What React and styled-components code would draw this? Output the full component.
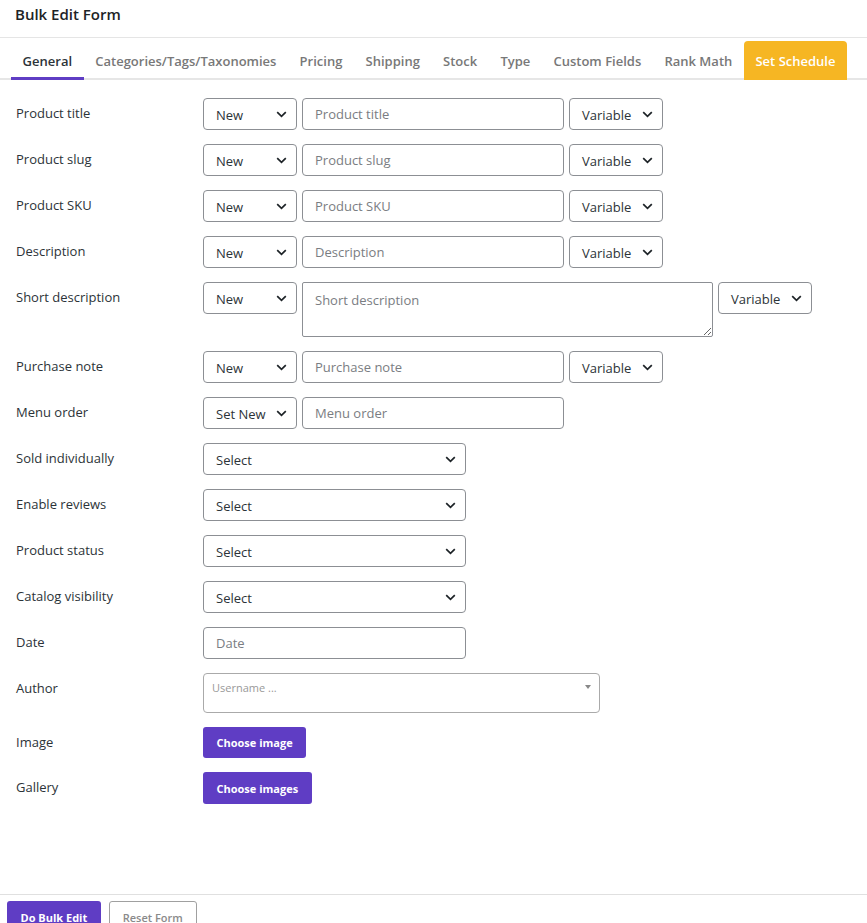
import React from "react";
import styled, { createGlobalStyle } from "styled-components";

const GlobalStyle = createGlobalStyle`
  html, body {
    margin: 0;
    padding: 0;
    background: #fff;
    overflow: hidden;
  }
  body {
    font-family: "Open Sans", "Noto Sans", sans-serif;
    color: #2c3338;
  }
  * {
    box-sizing: border-box;
  }
`;

const Page = styled.div`
  width: 867px;
  display: flex;
  flex-direction: column;
`;

const Header = styled.div`
  height: 38px;
  padding: 0 15px;
  display: flex;
  align-items: center;
  border-bottom: 1px solid #e5e5e5;
`;

const Title = styled.h1`
  margin: 0;
  margin-top: -9px;
  font-size: 15px;
  font-weight: 600;
  color: #1d2327;
`;

const TabBar = styled.div`
  display: flex;
  padding: 3px 0 0 11px;
  border-bottom: 2px solid #e6e6e6;
`;

const Tab = styled.div`
  height: 39px;
  margin-bottom: -2px;
  padding: 3px 11.6px 0;
  display: flex;
  align-items: center;
  font-size: 13px;
  font-weight: 600;
  white-space: nowrap;
  color: ${(p) => (p.$active ? "#2c3338" : p.$accent ? "#fff" : "#787878")};
  background: ${(p) => (p.$accent ? "#f6b623" : "transparent")};
  border-radius: ${(p) => (p.$accent ? "4px 4px 0 0" : "0")};
  border-bottom: 3px solid ${(p) => (p.$active ? "#5f3dc4" : "transparent")};
`;

const Body = styled.div`
  padding: 18px 16px 90px 16px;
`;

const Row = styled.div`
  display: grid;
  grid-template-columns: 187px 1fr;
  margin-bottom: 14px;
  &:last-child {
    margin-bottom: 0;
  }
`;

const Label = styled.div`
  font-size: 13px;
  line-height: 18px;
  padding-top: 6px;
  color: #2c3338;
`;

const Controls = styled.div`
  display: flex;
  align-items: flex-start;
  gap: 5px;
`;

const SelectBox = styled.div`
  width: ${(p) => p.$w}px;
  height: 32px;
  padding: 2px 9px 0 12px;
  display: flex;
  align-items: center;
  justify-content: space-between;
  border: 1px solid #8c8f94;
  border-radius: 4px;
  font-size: 13px;
  color: #2c3338;
  background: #fff;
  svg {
    flex-shrink: 0;
    margin-top: -2px;
  }
`;

const TextInput = styled.input`
  width: ${(p) => p.$w}px;
  height: 32px;
  padding: 0 12px;
  border: 1px solid #8c8f94;
  border-radius: 4px;
  font-family: inherit;
  font-size: 13px;
  color: #2c3338;
  &::placeholder {
    color: #7a7d82;
  }
`;

const TextArea = styled.textarea`
  width: 411px;
  height: 55px;
  padding: 7px 12px;
  border: 1px solid #8c8f94;
  border-radius: 2px;
  font-family: inherit;
  font-size: 13px;
  line-height: 20px;
  &::placeholder {
    color: #7a7d82;
  }
`;

const AuthorBox = styled.div`
  position: relative;
  width: 397px;
  height: 40px;
  padding: 6px 8px;
  border: 1px solid #aaa;
  border-radius: 4px;
  font-size: 11px;
  color: #999;
`;

const Caret = styled.span`
  position: absolute;
  right: 8px;
  top: 11px;
  border-left: 3px solid transparent;
  border-right: 3px solid transparent;
  border-top: 4px solid #888;
`;

const PurpleButton = styled.button`
  height: ${(p) => (p.$tall ? 32 : 31)}px;
  padding: 0 13.5px;
  border: none;
  border-radius: 3px;
  background: #5f3dc4;
  color: #fff;
  font-family: inherit;
  font-size: 11px;
  font-weight: 700;
`;

const Footer = styled.div`
  display: flex;
  gap: 8px;
  padding: 6px 7px;
  border-top: 1px solid #e0e0e0;
`;

const GhostButton = styled.button`
  height: 32px;
  padding: 0 13px;
  border: 1px solid #a0a0a0;
  border-radius: 3px;
  background: #fff;
  color: #8a8a8a;
  font-family: inherit;
  font-size: 11px;
  font-weight: 600;
`;

function Chevron() {
  return (
    <svg width="11" height="7" viewBox="0 0 11 7">
      <path d="M1.2 1.2 L5.5 5.4 L9.8 1.2" fill="none" stroke="#1d2327" strokeWidth="1.7" />
    </svg>
  );
}

function Select({ value, w }) {
  return (
    <SelectBox $w={w}>
      <span>{value}</span>
      <Chevron />
    </SelectBox>
  );
}

const textRows = ["Product title", "Product slug", "Product SKU", "Description"];
const selectRows = ["Sold individually", "Enable reviews", "Product status", "Catalog visibility"];
const tabs = ["General", "Categories/Tags/Taxonomies", "Pricing", "Shipping", "Stock", "Type", "Custom Fields", "Rank Math"];

export default function App() {
  return (
    <Page>
      <GlobalStyle />
      <Header>
        <Title>Bulk Edit Form</Title>
      </Header>
      <TabBar>
        {tabs.map((t, i) => (
          <Tab key={t} $active={i === 0}>
            {t}
          </Tab>
        ))}
        <Tab $accent>Set Schedule</Tab>
      </TabBar>
      <Body>
        {textRows.map((r) => (
          <Row key={r}>
            <Label>{r}</Label>
            <Controls>
              <Select value="New" w={94} />
              <TextInput $w={262} placeholder={r} />
              <Select value="Variable" w={94} />
            </Controls>
          </Row>
        ))}
        <Row>
          <Label>Short description</Label>
          <Controls>
            <Select value="New" w={94} />
            <TextArea placeholder="Short description" />
            <Select value="Variable" w={94} />
          </Controls>
        </Row>
        <Row>
          <Label>Purchase note</Label>
          <Controls>
            <Select value="New" w={94} />
            <TextInput $w={262} placeholder="Purchase note" />
            <Select value="Variable" w={94} />
          </Controls>
        </Row>
        <Row>
          <Label>Menu order</Label>
          <Controls>
            <Select value="Set New" w={94} />
            <TextInput $w={262} placeholder="Menu order" />
          </Controls>
        </Row>
        {selectRows.map((r) => (
          <Row key={r}>
            <Label>{r}</Label>
            <Controls>
              <Select value="Select" w={263} />
            </Controls>
          </Row>
        ))}
        <Row>
          <Label>Date</Label>
          <Controls>
            <TextInput $w={263} placeholder="Date" />
          </Controls>
        </Row>
        <Row>
          <Label>Author</Label>
          <Controls>
            <AuthorBox>
              Username ...
              <Caret />
            </AuthorBox>
          </Controls>
        </Row>
        <Row>
          <Label>Image</Label>
          <Controls>
            <PurpleButton>Choose image</PurpleButton>
          </Controls>
        </Row>
        <Row>
          <Label>Gallery</Label>
          <Controls>
            <PurpleButton $tall>Choose images</PurpleButton>
          </Controls>
        </Row>
      </Body>
      <Footer>
        <PurpleButton $tall>Do Bulk Edit</PurpleButton>
        <GhostButton>Reset Form</GhostButton>
      </Footer>
    </Page>
  );
}
